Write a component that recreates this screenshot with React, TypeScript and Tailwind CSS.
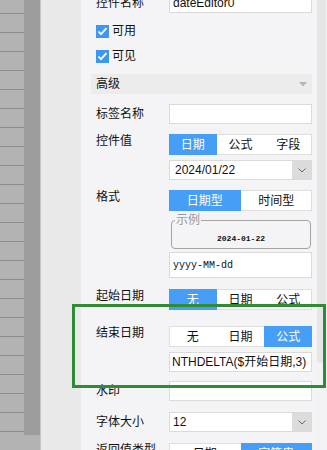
import React from "react";

function Seg({ items, sel, className = "" }: { items: string[]; sel: number; className?: string }) {
  return (
    <div className={`flex h-[21px] bg-white shadow-[inset_0_0_0_1px_#dedede] ${className}`}>
      {items.map((t, i) => (
        <div
          key={i}
          className={`flex-1 flex items-center justify-center text-[12px] ${
            i === sel ? "bg-[#469ef6] text-white" : "text-[#111111]"
          }`}
        >
          {t}
        </div>
      ))}
    </div>
  );
}

function Label({ children, seg }: { children: React.ReactNode; seg?: boolean }) {
  return (
    <div
      className={`w-[73px] shrink-0 text-[12px] text-[#111111] whitespace-nowrap ${
        seg ? "leading-[15px]" : "leading-[20px]"
      }`}
    >
      {children}
    </div>
  );
}

function Input({ children, className = "" }: { children?: React.ReactNode; className?: string }) {
  return (
    <div
      className={`h-[20px] bg-white border border-[#dadada] flex items-center text-[12px] text-[#111111] whitespace-nowrap overflow-hidden ${className}`}
    >
      {children}
    </div>
  );
}

function Select({ value, pl }: { value: string; pl: string }) {
  return (
    <div className="h-[20px] bg-white border border-[#dadada] flex items-stretch text-[12px] text-[#111111]">
      <div className={`flex-1 flex items-center ${pl}`}>{value}</div>
      <div className="w-[19px] bg-[#dcdcdc] flex items-center justify-center">
        <svg width="8" height="5" viewBox="0 0 8 5">
          <polyline points="0.5,0.5 4,4 7.5,0.5" fill="none" stroke="#666666" strokeWidth="1" />
        </svg>
      </div>
    </div>
  );
}

function Check({ label, className = "" }: { label: string; className?: string }) {
  return (
    <div className={`flex items-center h-[13px] ${className}`}>
      <div className="w-[13px] h-[13px] bg-[#3d97ef] flex items-center justify-center">
        <svg width="13" height="13" viewBox="0 0 13 13">
          <path d="M2.5 6.5 L5 9.2 L10.5 3.2" fill="none" stroke="white" strokeWidth="1.8" />
        </svg>
      </div>
      <span className="ml-[3px] text-[12px] leading-[13px] text-[#111111]">{label}</span>
    </div>
  );
}

export default function App() {
  return (
    <div className="relative w-[327px] h-[450px] overflow-hidden flex font-['Liberation_Sans','Noto_Sans_CJK_SC',sans-serif]">
      {/* left sheet rows */}
      <div className="w-[24px] shrink-0 bg-[#b3b3b3] flex flex-col overflow-hidden">
        <div className="h-[13px] shrink-0" />
        {Array.from({ length: 23 }).map((_, i) => (
          <div key={i} className="h-[19px] shrink-0 border-t border-[#8d8d8d]" />
        ))}
      </div>
      <div className="w-[16px] shrink-0 flex flex-col">
        <div className="h-[435px] bg-[#9d9d9d]" />
        <div className="flex-1 bg-[#b3b3b3]" />
      </div>
      <div className="w-[1px] shrink-0 bg-[#c6c6c6]" />
      <div className="w-[40px] shrink-0 bg-[#e9e9e9]" />

      {/* property panel */}
      <div className="flex-1 bg-[#f4f4f6] pl-[15px] pr-[4px] overflow-hidden">
        <div className="flex mt-[-7px]">
          <Label>控件名称</Label>
          <Input className="flex-1 pl-[3px]">dateEditor0</Input>
        </div>

        <Check label="可用" className="mt-[12px]" />
        <Check label="可见" className="mt-[12px]" />

        <div className="mt-[11px] -ml-[5px] h-[20px] bg-[#ececec] flex items-center justify-between pl-[5px] pr-[5px]">
          <span className="text-[12px] text-[#111111]">高级</span>
          <svg width="8" height="5" viewBox="0 0 8 5">
            <polygon points="0,0 8,0 4,4.5" fill="#b5b5b5" />
          </svg>
        </div>

        <div className="flex mt-[10px]">
          <Label>标签名称</Label>
          <Input className="flex-1" />
        </div>

        <div className="flex mt-[10px]">
          <Label seg>控件值</Label>
          <div className="flex-1">
            <Seg items={["日期", "公式", "字段"]} sel={0} />
            <div className="mt-[5px]">
              <Select value="2024/01/22" pl="pl-[5px]" />
            </div>
          </div>
        </div>

        <div className="flex mt-[10px]">
          <Label seg>格式</Label>
          <div className="flex-1">
            <Seg items={["日期型", "时间型"]} sel={0} />
            <fieldset className="mt-[3px] mx-[2px] mr-[1px] h-[35px] border border-[#a3a3a3] rounded-[4px] flex flex-col items-center">
              <legend className="ml-[3px] px-[1px] text-[12px] leading-[12px] text-[#9a9a9a]">示例</legend>
              <div className="mt-[9px] text-[8px] leading-[8px] font-bold text-[#111111] font-['Liberation_Mono',monospace]">
                2024-01-22
              </div>
            </fieldset>
            <div className="mt-[3px] h-[26px] bg-white border border-[#dadada] flex items-center pl-[3px] text-[10px] text-[#111111] font-['Liberation_Mono',monospace]">
              yyyy-MM-dd
            </div>
          </div>
        </div>

        <div className="flex mt-[11px]">
          <Label seg>起始日期</Label>
          <Seg className="flex-1" items={["无", "日期", "公式"]} sel={0} />
        </div>

        <div className="flex mt-[16px]">
          <Label seg>结束日期</Label>
          <div className="flex-1">
            <Seg items={["无", "日期", "公式"]} sel={2} />
            <Input className="mt-[5px] pl-[2px]">NTHDELTA($开始日期,3)</Input>
          </div>
        </div>

        <div className="flex mt-[9px]">
          <Label>水印</Label>
          <Input className="flex-1" />
        </div>

        <div className="flex mt-[11px]">
          <Label>字体大小</Label>
          <div className="flex-1">
            <Select value="12" pl="pl-[3px]" />
          </div>
        </div>

        <div className="flex mt-[11px]">
          <Label seg>返回值类型</Label>
          <Seg className="flex-1" items={["日期", "字符串"]} sel={1} />
        </div>
      </div>

      {/* scrollbar */}
      <div className="w-[11px] shrink-0 bg-[#f3f3f5] flex justify-center">
        <div className="w-[9px] h-[363px] bg-[#e6e6e6] rounded-b-[4px]" />
      </div>

      {/* annotation box */}
      <div className="absolute left-[72px] top-[304px] w-[254px] h-[84px] border-[3px] border-[#2f8c35]" />
    </div>
  );
}
